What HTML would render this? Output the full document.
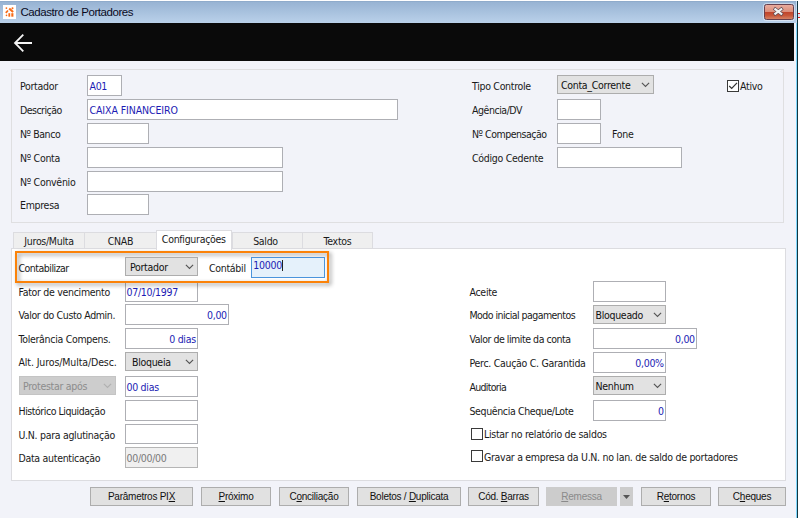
<!DOCTYPE html>
<html lang="pt-BR">
<head>
<meta charset="utf-8">
<title>Cadastro de Portadores</title>
<style>
html,body{margin:0;padding:0;}
body{width:800px;height:518px;overflow:hidden;background:#fff;position:relative;
  font-family:"DejaVu Sans Condensed","Liberation Sans",sans-serif;font-size:10.5px;letter-spacing:-0.3px;color:#1a1a1a;}
#win{position:absolute;left:0;top:1px;width:796px;height:517px;background:#f2f3f9;overflow:hidden;}
#edge1{position:absolute;left:796px;top:23px;width:1px;height:495px;background:#80d8fd;}
#edge2{position:absolute;left:797px;top:1px;width:1px;height:517px;background:#113540;}
#edge0{position:absolute;left:796px;top:1px;width:1px;height:22px;background:#c6dcf2;}
#redmark{position:absolute;left:798px;top:13px;width:2px;height:5px;background:#e8e0f0;border-top:1px solid #e02020;border-bottom:1px solid #e02020;box-sizing:border-box;}
#title{position:absolute;left:0;top:0;width:797px;height:22px;background:linear-gradient(#96b2d2,#bad1ea);box-shadow:inset 0 1px 0 #8fabcb;}
#title .ico{position:absolute;left:2.5px;top:4px;width:13.5px;height:13.5px;background:#fff;}
#title .txt{position:absolute;left:20.500px;top:4.300px;font-family:"Liberation Sans",sans-serif;font-size:11.5px;letter-spacing:-0.43px;color:#0a0a1e;white-space:nowrap;line-height:15px;}
#close{position:absolute;left:764.2px;top:3px;width:29.800px;height:16px;border-radius:2.5px;border:1px solid #68404e;box-sizing:border-box;
  background:linear-gradient(#e9ab9d 0%,#dc907d 47%,#c0432a 50%,#c8573a 75%,#d58264 100%);box-shadow:0 0 0 1px rgba(255,255,255,.45);}
#bar{position:absolute;left:0;top:22px;width:794px;height:38px;background:#0a0a0a;}
.panel{position:absolute;box-sizing:border-box;border:1px solid #dedee2;}
.lbl{position:absolute;white-space:nowrap;line-height:13px;height:13px;margin-top:1px;}
.inp{position:absolute;box-sizing:border-box;height:21px;background:#fff;border:1px solid #aeafb4;color:#1c1cb4;line-height:21px;padding:0 1.200px 0 1.500px;white-space:nowrap;overflow:hidden;}
.inp.r{text-align:right;}
.inp.dis{background:#f0f0f0;color:#7a7a7a;border-color:#b5b5b5;}
.cmb{position:absolute;box-sizing:border-box;height:19px;background:#e2e2e2;border:1px solid #adadad;color:#111;line-height:18px;padding:0 3px;white-space:nowrap;overflow:hidden;}
.cmb.dis{background:#cdcdcd;border-color:#c4c4c4;color:#8c8c8c;}
.cmb svg{position:absolute;right:3.400px;top:5.500px;}
.btn{position:absolute;box-sizing:border-box;top:486px;height:19px;background:#e1e1e1;border:1px solid #adadad;text-align:center;line-height:17px;
  font-family:"Liberation Sans",sans-serif;font-size:10px;letter-spacing:-0.25px;color:#111;white-space:nowrap;}
.btn.dis{background:#cccccc;border-color:#cccccc;color:#8a8a8a;}
.btn u{text-decoration:underline;}
.chk{position:absolute;box-sizing:border-box;width:12px;height:12px;background:#fff;border:1px solid #3a3a3a;}
.tab{position:absolute;box-sizing:border-box;top:231px;height:17px;border:1px solid #dcdce0;border-bottom:none;background:#efefef;text-align:center;line-height:17px;white-space:nowrap;}
.tab.act{top:229px;height:20px;background:#fff;line-height:17px;z-index:3;}
</style>
</head>
<body>
<div id="win">
  <div id="title">
    <div class="ico"><svg width="14" height="14" viewBox="2.500 5 14 14" style="position:absolute;left:0;top:0"><g fill="#f76a16" stroke="#f76a16" stroke-linecap="butt"><circle cx="5.900" cy="8.100" r=".9" stroke="none"/><circle cx="12" cy="8.200" r="1" stroke="none"/><circle cx="6" cy="15.400" r=".8" stroke="none"/><path d="M8.700 8.400l3.900 3.700" stroke-width="2" fill="none"/><path d="M5.300 12.800l2.200-2.300" stroke-width="1.800" fill="none"/><rect x="7.900" y="13.200" width="1.800" height="3.500" stroke="none"/><rect x="10.800" y="13.200" width="2.100" height="3.500" stroke="none"/></g></svg></div>
    <div class="txt">Cadastro de Portadores</div>
    <div id="close"><svg width="28" height="14" viewBox="0 0 28 14" style="position:absolute;left:0;top:0"><g fill="none" stroke-linecap="square"><path d="M10.300 4.200l6 4.600M16.300 4.200l-6 4.600" stroke="#5e4a52" stroke-width="3.400"/><path d="M10.300 4.200l6 4.600M16.300 4.200l-6 4.600" stroke="#f2f2f2" stroke-width="2.100"/></g></svg></div>
  </div>
  <div id="bar">
    <svg width="40" height="38" viewBox="0 0 40 38" style="position:absolute;left:0;top:0"><path d="M32 20H15.200M23.300 11.700L15 20l8.300 8.300" fill="none" stroke="#f4f4f4" stroke-width="1.800"/></svg>
  </div>

  <!-- top panel -->
  <div class="panel" style="left:11px;top:68px;width:773px;height:153.700px;border-color:#dfdfe1;"></div>
  <div class="lbl" style="left:20px;top:78px;">Portador</div>
  <div class="inp" style="left:87px;top:74px;width:35px;">A01</div>
  <div class="lbl" style="left:20px;top:102px;letter-spacing:-0.53px;">Descrição</div>
  <div class="inp" style="left:87px;top:98px;width:311px;letter-spacing:-0.1px;">CAIXA FINANCEIRO</div>
  <div class="lbl" style="left:20px;top:126px;letter-spacing:-0.44px;">Nº Banco</div>
  <div class="inp" style="left:87px;top:122px;width:62px;"></div>
  <div class="lbl" style="left:20px;top:150px;">Nº Conta</div>
  <div class="inp" style="left:87px;top:146px;width:196px;"></div>
  <div class="lbl" style="left:20px;top:173.500px;">Nº Convênio</div>
  <div class="inp" style="left:87px;top:169.600px;width:196px;"></div>
  <div class="lbl" style="left:20px;top:197px;">Empresa</div>
  <div class="inp" style="left:87px;top:193.400px;width:62px;"></div>

  <div class="lbl" style="left:472px;top:78px;">Tipo Controle</div>
  <div class="cmb" style="left:557px;top:74px;width:97px;">Conta_Corrente<svg width="9" height="6" viewBox="0 0 9 6"><path d="M.9 .9L4.500 4.500 8.100 .9" fill="none" stroke="#555" stroke-width="1.150"/></svg></div>
  <div class="lbl" style="left:472px;top:102px;letter-spacing:-0.46px;">Agência/DV</div>
  <div class="inp" style="left:557px;top:98px;width:44px;"></div>
  <div class="lbl" style="left:472px;top:126px;letter-spacing:-0.48px;">Nº Compensação</div>
  <div class="inp" style="left:557px;top:122px;width:44px;"></div>
  <div class="lbl" style="left:612px;top:126px;">Fone</div>
  <div class="lbl" style="left:472px;top:150px;">Código Cedente</div>
  <div class="inp" style="left:557px;top:146px;width:125px;"></div>
  <div class="chk" style="left:727px;top:79px;"><svg width="10" height="10" viewBox="0 0 10 10" style="position:absolute;left:0;top:0"><path d="M1.200 5L3.700 7.500 9 1.800" fill="none" stroke="#333" stroke-width="1.200"/></svg></div>
  <div class="lbl" style="left:740px;top:78px;">Ativo</div>

  <!-- tabs -->
  <div class="tab" style="left:13px;width:72px;">Juros/Multa</div>
  <div class="tab" style="left:84px;width:73px;">CNAB</div>
  <div class="tab act" style="left:156px;width:75.500px;">Configurações</div>
  <div class="tab" style="left:232px;width:71px;padding-right:4px;">Saldo</div>
  <div class="tab" style="left:302px;width:71px;">Textos</div>
  <div class="panel" style="left:11px;top:247px;width:775px;height:233px;background:#fff;border-color:#dcdce0;"></div>

  <!-- highlight -->
  <div style="position:absolute;left:15.2px;top:250.2px;width:313.8px;height:31.800px;background:#fff;z-index:2;"></div>
  <div style="position:absolute;left:15.2px;top:250.2px;width:313.8px;height:31.800px;box-sizing:border-box;border:2px solid #fb8208;filter:drop-shadow(2.500px 2.500px 2px rgba(0,0,0,.45));z-index:2;"></div>
  <div class="lbl" style="left:18.500px;top:260px;z-index:3;letter-spacing:-0.51px;">Contabilizar</div>
  <div class="cmb" style="left:125px;top:256px;width:73px;z-index:3;padding-left:4px;">Portador<svg width="9" height="6" viewBox="0 0 9 6"><path d="M.9 .9L4.500 4.500 8.100 .9" fill="none" stroke="#555" stroke-width="1.150"/></svg></div>
  <div class="lbl" style="left:209px;top:260px;z-index:3;">Contábil</div>
  <div class="inp" style="left:251px;top:256px;width:73.500px;z-index:3;background:#e5f1fb;border-color:#4a94dc;padding-left:1.300px;line-height:15px;color:#1c1cb4;">10000<span style="display:inline-block;width:1px;height:11px;background:#222;vertical-align:-2px;"></span></div>

  <!-- left column -->
  <div class="lbl" style="left:18.500px;top:284px;">Fator de vencimento</div>
  <div class="inp" style="left:125px;top:280px;width:73px;padding-left:0.5px;">07/10/1997</div>
  <div class="lbl" style="left:18.500px;top:307px;letter-spacing:-0.38px;">Valor do Custo Admin.</div>
  <div class="inp r" style="left:125px;top:303px;width:104px;">0,00</div>
  <div class="lbl" style="left:18.500px;top:331px;">Tolerância Compens.</div>
  <div class="inp r" style="left:125px;top:327px;width:73px;">0 dias</div>
  <div class="lbl" style="left:18.500px;top:354px;letter-spacing:-0.12px;">Alt. Juros/Multa/Desc.</div>
  <div class="cmb" style="left:125px;top:351px;width:73px;padding-left:6px;">Bloqueia<svg width="9" height="6" viewBox="0 0 9 6"><path d="M.9 .9L4.500 4.500 8.100 .9" fill="none" stroke="#555" stroke-width="1.150"/></svg></div>
  <div class="cmb dis" style="left:19px;top:375px;width:97px;">Protestar após<svg width="9" height="6" viewBox="0 0 9 6"><path d="M.9 .9L4.500 4.500 8.100 .9" fill="none" stroke="#b0b0b0" stroke-width="1.150"/></svg></div>
  <div class="inp" style="left:125px;top:375px;width:73px;padding-left:0.5px;">00 dias</div>
  <div class="lbl" style="left:18.500px;top:402.5px;letter-spacing:-0.46px;">Histórico Liquidação</div>
  <div class="inp" style="left:125px;top:399px;width:73px;"></div>
  <div class="lbl" style="left:18.500px;top:426.5px;">U.N. para aglutinação</div>
  <div class="inp" style="left:125px;top:422.700px;width:73px;height:20.700px;"></div>
  <div class="lbl" style="left:18.500px;top:450.3px;">Data autenticação</div>
  <div class="inp dis" style="left:125px;top:446px;width:73px;padding-left:0.5px;">00/00/00</div>

  <!-- right column -->
  <div class="lbl" style="left:469.500px;top:284px;">Aceite</div>
  <div class="inp" style="left:593px;top:280px;width:73px;"></div>
  <div class="lbl" style="left:469.500px;top:307px;letter-spacing:-0.55px;">Modo inicial pagamentos</div>
  <div class="cmb" style="left:593px;top:304px;width:73px;padding-left:1.5px;">Bloqueado<svg width="9" height="6" viewBox="0 0 9 6"><path d="M.9 .9L4.500 4.500 8.100 .9" fill="none" stroke="#555" stroke-width="1.150"/></svg></div>
  <div class="lbl" style="left:469.500px;top:331px;letter-spacing:-0.47px;">Valor de limite da conta</div>
  <div class="inp r" style="left:593px;top:327px;width:104px;">0,00</div>
  <div class="lbl" style="left:469.500px;top:355px;">Perc. Caução C. Garantida</div>
  <div class="inp r" style="left:593px;top:351px;width:73px;">0,00%</div>
  <div class="lbl" style="left:469.500px;top:379px;letter-spacing:-0.71px;">Auditoria</div>
  <div class="cmb" style="left:593px;top:375px;width:73px;padding-left:1.5px;">Nenhum<svg width="9" height="6" viewBox="0 0 9 6"><path d="M.9 .9L4.500 4.500 8.100 .9" fill="none" stroke="#555" stroke-width="1.150"/></svg></div>
  <div class="lbl" style="left:469.500px;top:403px;letter-spacing:-0.38px;">Sequência Cheque/Lote</div>
  <div class="inp r" style="left:593px;top:399px;width:73px;">0</div>
  <div class="chk" style="left:471px;top:427px;"></div>
  <div class="lbl" style="left:484px;top:426px;">Listar no relatório de saldos</div>
  <div class="chk" style="left:471px;top:449px;"></div>
  <div class="lbl" style="left:484px;top:448.5px;">Gravar a empresa da U.N. no lan. de saldo de portadores</div>

  <!-- buttons -->
  <div class="btn" style="left:90px;width:103px;">Parâmetros PI<u>X</u></div>
  <div class="btn" style="left:201px;width:70px;"><u>P</u>róximo</div>
  <div class="btn" style="left:279px;width:70px;">C<u>o</u>nciliação</div>
  <div class="btn" style="left:357px;width:104px;">Boletos / <u>D</u>uplicata</div>
  <div class="btn" style="left:468px;width:71px;">Cód. <u>B</u>arras</div>
  <div class="btn dis" style="left:546px;width:71px;"><u>R</u>emessa</div>
  <div class="btn dis" style="left:620px;width:13px;"><svg width="7" height="4" viewBox="0 0 7 4" style="position:absolute;left:2px;top:7px"><path d="M0 0h7L3.500 4z" fill="#555"/></svg></div>
  <div class="btn" style="left:641px;width:70px;">R<u>e</u>tornos</div>
  <div class="btn" style="left:718px;width:68px;">C<u>h</u>eques</div>
</div>
<div id="edge0"></div>
<div id="edge1"></div>
<div id="edge2"></div>
<div id="redmark"></div>
</body>
</html>
